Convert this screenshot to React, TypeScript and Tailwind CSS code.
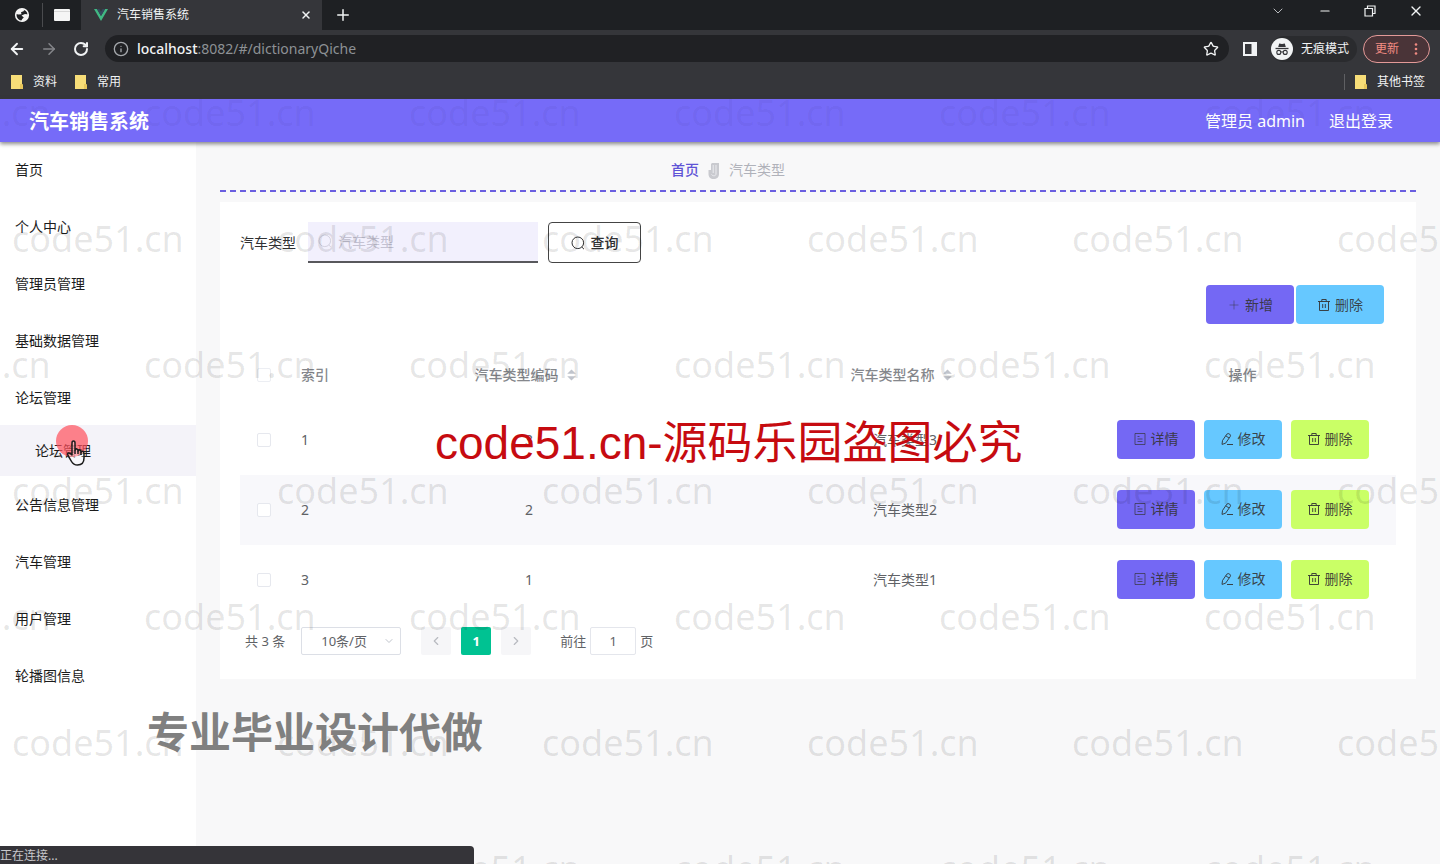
import React from 'react';
import { ArrowLeft, ArrowRight, ChevronDown, ChevronLeft, ChevronRight, Info, Minus, Plus, RotateCw, Star, X } from 'lucide-react';

type IconProps = { className?: string };

const GlobeIcon: React.FC<IconProps> = ({ className }) => (
  <svg className={className} viewBox="0 0 16 16" fill="none">
    <circle cx="8" cy="8" r="6.3" stroke="#f4f4f4" strokeWidth="1.6" />
    <path d="M1.6 7C2.4 3.5 5.6 1.2 9.6 1.8L10 4L7 5.2L7.5 7.2L4.6 7.6Z" fill="#f4f4f4" />
    <path d="M14.4 7.5L11 7L7.5 8.6L9.8 10.6L8.2 12L7 14.4C11 15 14.4 11.8 14.4 7.5Z" fill="#f4f4f4" />
  </svg>
);

const WindowIcon: React.FC<IconProps> = ({ className }) => (
  <svg className={className} viewBox="0 0 16 12">
    <rect width="16" height="12" rx="1" fill="#f5f5f5" />
    <path d="M0 2.5H16" stroke="#c4c4c4" strokeWidth="0.6" />
  </svg>
);

const VueIcon: React.FC<IconProps> = ({ className }) => (
  <svg className={className} viewBox="0 0 14 12">
    <path d="M0 0H2.9L7 7.1L11.1 0H14L7 12Z" fill="#41b883" />
    <path d="M2.9 0H5.4L7 2.8L8.6 0H11.1L7 7.1Z" fill="#35495e" />
  </svg>
);

const RestoreIcon: React.FC<IconProps> = ({ className }) => (
  <svg className={className} viewBox="0 0 12 12" fill="none" stroke="currentColor" strokeWidth="1.2">
    <path d="M1 3.5H8.5V11H1ZM3.5 3.5V1H11V8.5H8.5" />
  </svg>
);

const FolderIcon: React.FC<IconProps> = ({ className }) => (
  <svg className={className} viewBox="0 0 12 14">
    <path d="M0 0H11V9L12 10V14H0Z" fill="#f7dd78" />
    <path d="M9 9L11 9L12 10V14H9Z" fill="#e8c65a" />
  </svg>
);

const SidePanelIcon: React.FC<IconProps> = ({ className }) => (
  <svg className={className} viewBox="0 0 14 14">
    <path fillRule="evenodd" d="M0 0H14V14H0ZM2 2V12H8.5V2Z" fill="#f1f3f4" />
  </svg>
);

const IncognitoIcon: React.FC<IconProps> = ({ className }) => (
  <svg className={className} viewBox="0 0 22 22" fill="none">
    <circle cx="11" cy="11" r="11" fill="#f1f3f4" />
    <path d="M7.2 9L8.2 5.4L11 6L13.8 5.4L14.8 9Z" fill="#35363a" />
    <path d="M4.5 10.5H17.5" stroke="#35363a" strokeWidth="1.3" />
    <circle cx="7.8" cy="14.4" r="2" stroke="#35363a" strokeWidth="1.1" />
    <circle cx="14.2" cy="14.4" r="2" stroke="#35363a" strokeWidth="1.1" />
    <path d="M9.8 14.2Q11 13.4 12.2 14.2" stroke="#35363a" />
  </svg>
);

const ClipIcon: React.FC<IconProps> = ({ className }) => (
  <svg className={className} viewBox="0 0 12 16">
    <path d="M4 0H11V11C11 14 9 16 5.5 16C2.5 16 0.5 14 0.5 11V7H3V1Z" fill="#c9cacf" />
    <path d="M5.2 2V10M8 2V11C8 13 5 13.5 3.5 11.5" stroke="#ececf0" fill="none" />
  </svg>
);

const SearchIcon: React.FC<IconProps> = ({ className }) => (
  <svg className={className} viewBox="0 0 14 14" fill="none" stroke="currentColor">
    <circle cx="6.8" cy="6.8" r="5.8" />
    <path d="M10.8 11L13 13.2" />
  </svg>
);

const TrashIcon: React.FC<IconProps> = ({ className }) => (
  <svg className={className} viewBox="0 0 14 14" fill="none" stroke="currentColor">
    <path d="M1 3.5H13M2.5 3.5V12.5H11.5V3.5M4.8 3.5V1.5H9.2V3.5M5.7 6V10M8.3 6V10" />
  </svg>
);

const DetailIcon: React.FC<IconProps> = ({ className }) => (
  <svg className={className} viewBox="0 0 14 14" fill="none" stroke="currentColor" strokeOpacity="0.75">
    <path d="M2 1.5H12V12.5H2ZM4.5 4.5H6.5M4.5 7H9.5M4.5 9.5H9.5" />
  </svg>
);

const EditIcon: React.FC<IconProps> = ({ className }) => (
  <svg className={className} viewBox="0 0 14 14" fill="none" stroke="currentColor">
    <path d="M2.5 8.5L6.8 2.2Q8.2 1 9.6 2Q11 3.2 10.2 4.6L5.6 11.2L2 12.4ZM5.8 3.8L9 6M7 12.5H13" />
  </svg>
);

const SortIcon: React.FC<IconProps> = ({ className }) => (
  <svg className={className} viewBox="0 0 10 14" fill="#c0c4cc">
    <path d="M0 5.5L5 0.5L10 5.5ZM0 8.5H10L5 13.5Z" />
  </svg>
);

const HandIcon: React.FC<IconProps> = ({ className }) => (
  <svg className={className} viewBox="0 0 20 26" fill="none" stroke="#1c1c1c" strokeWidth="1.5" strokeLinejoin="round">
    <path
      d="M6 15V3Q6 1 7.5 1Q9 1 9 3V10Q9.5 8.5 11 9Q12 9.3 12 11Q12.5 9.5 14 10Q15 10.4 15 12Q15.6 11 17 11.5Q18 12 18 13.5V18Q18 25 11.5 25Q7.5 25 5.5 21.5L2 15.5Q1 13.5 2.5 13Q4 12.6 6 15Z"
      fill="#ffffff"
      fillOpacity="0.35"
    />
    <path d="M9 10V14M12 11V14M15 12V15" />
  </svg>
);

const menu = [
  { label: '首页' },
  { label: '个人中心' },
  { label: '管理员管理' },
  { label: '基础数据管理' },
  { label: '论坛管理', child: '论坛管理' },
  { label: '公告信息管理' },
  { label: '汽车管理' },
  { label: '用户管理' },
  { label: '轮播图信息' },
];

const rows = [
  { index: 1, code: '3', name: '汽车类型3' },
  { index: 2, code: '2', name: '汽车类型2' },
  { index: 3, code: '1', name: '汽车类型1' },
];

const actionClass = 'flex h-[39px] w-[78px] items-center justify-center gap-1 rounded text-sm text-[#333]/90';

const BrowserChrome: React.FC = () => (
  <div className="bg-[#35363a] text-[#f1f3f4]">
    <div className="flex h-[30px] items-center bg-[#1e2023]">
      <button className="ml-[14px]" aria-label="标签页 1">
        <GlobeIcon className="h-4 w-4" />
      </button>
      <span className="ml-3 h-6 w-px bg-[#4a4b4e]" />
      <button className="mx-[11px]" aria-label="标签页 2">
        <WindowIcon className="h-3 w-4" />
      </button>
      <div className="flex h-full w-[241px] items-center bg-[#35363a] pr-[10px] pl-3">
        <VueIcon className="h-3 w-4" />
        <span className="ml-2 flex-1 text-xs">汽车销售系统</span>
        <button aria-label="关闭标签页">
          <X className="h-3 w-3" strokeWidth={3} />
        </button>
      </div>
      <button className="ml-3" aria-label="新标签页">
        <Plus className="h-[18px] w-[18px]" />
      </button>
      <div className="mr-4 ml-auto flex items-center gap-8 pb-2">
        <button aria-label="搜索标签页">
          <ChevronDown className="h-4 w-4 text-[#b8babd]" strokeWidth={1.5} />
        </button>
        <button aria-label="最小化">
          <Minus className="h-[14px] w-[14px]" />
        </button>
        <button aria-label="还原">
          <RestoreIcon className="h-3 w-3" />
        </button>
        <button aria-label="关闭">
          <X className="h-4 w-4" />
        </button>
      </div>
    </div>

    <div className="flex h-[37px] items-center pr-[10px] pl-2">
      <button aria-label="后退">
        <ArrowLeft className="h-[18px] w-[18px]" strokeWidth={2.5} />
      </button>
      <button className="ml-[14px] text-[#85868a]" aria-label="前进">
        <ArrowRight className="h-[18px] w-[18px]" />
      </button>
      <button className="ml-[15px]" aria-label="刷新">
        <RotateCw className="h-4 w-4" strokeWidth={3} />
      </button>
      <div className="ml-4 flex h-[27px] flex-1 items-center rounded-full bg-[#202124] pr-[10px] pl-2 text-sm">
        <Info className="mr-2 h-4 w-4 text-[#a5a8ac]" />
        <label htmlFor="address" className="font-medium">localhost</label>
        <input id="address" className="min-w-0 flex-1 bg-transparent text-[#8d9195] outline-none" defaultValue=":8082/#/dictionaryQiche" />
        <button aria-label="收藏">
          <Star className="h-4 w-4" />
        </button>
      </div>
      <button className="ml-[14px]" aria-label="侧边栏">
        <SidePanelIcon className="h-[14px] w-[14px]" />
      </button>
      <div className="ml-[14px] flex h-[26px] items-center gap-2 rounded-full bg-[#2a2b2e] pr-2 text-xs">
        <IncognitoIcon className="h-[22px] w-[22px]" />
        无痕模式
      </div>
      <button className="ml-[6px] flex h-7 w-[67px] items-center justify-between rounded-full border border-[#e39a98] bg-[#4a3438] px-[11px] text-xs text-[#f28b82]">
        更新
        <svg className="h-3 w-1" viewBox="0 0 4 12" fill="currentColor">
          <circle cx="2" cy="1.5" r="1.3" />
          <circle cx="2" cy="6" r="1.3" />
          <circle cx="2" cy="10.5" r="1.3" />
        </svg>
      </button>
    </div>

    <div className="flex h-8 items-center pr-[15px] pb-[2px] pl-[11px] text-xs">
      <a href="#ziliao" className="flex items-center gap-[10px]">
        <FolderIcon className="h-[14px] w-3" />
        资料
      </a>
      <a href="#changyong" className="ml-[18px] flex items-center gap-[10px]">
        <FolderIcon className="h-[14px] w-3" />
        常用
      </a>
      <a href="#other" className="ml-auto flex items-center gap-[10px]">
        <span className="h-4 w-px bg-[#5f6063]" />
        <FolderIcon className="h-[14px] w-3" />
        其他书签
      </a>
    </div>
  </div>
);

const Sidebar: React.FC = () => (
  <nav className="w-[196px] shrink-0 bg-white text-sm text-[#1c1c1c]">
    {menu.map((item) => (
      <div key={item.label}>
        <a href="#menu" className="flex h-[57px] items-center pb-[2px] pl-[15px]">
          {item.label}
        </a>
        {item.child && (
          <a href="#forum" className="relative -mt-[2px] mb-px flex h-[51px] items-center bg-[#f4f3f9] pl-[35px]">
            {item.child}
            <span className="absolute top-0 left-14 h-8 w-8 rounded-full bg-[#ff4f5b]/70" />
            <HandIcon className="absolute top-[15px] left-[66px] h-[26px] w-5" />
          </a>
        )}
      </div>
    ))}
  </nav>
);

const DataTable: React.FC = () => (
  <table className="mt-5 w-full table-fixed text-sm text-[#606266]">
    <colgroup>
      <col className="w-12" />
      <col className="w-[53px]" />
      <col />
      <col />
      <col className="w-[303px]" />
    </colgroup>
    <thead>
      <tr className="h-[61px] text-[#85878c]">
        <th>
          <input type="checkbox" aria-label="全选" className="mx-auto block h-[14px] w-[14px] appearance-none rounded-xs border border-[#eceef3] bg-white" />
        </th>
        <th className="pl-[13px] text-left font-medium">索引</th>
        <th className="pr-2 font-medium">
          <span className="flex items-center justify-center gap-2">
            汽车类型编码
            <SortIcon className="h-3 w-[9px]" />
          </span>
        </th>
        <th className="pr-2 font-medium">
          <span className="flex items-center justify-center gap-2">
            汽车类型名称
            <SortIcon className="h-3 w-[9px]" />
          </span>
        </th>
        <th className="pr-1 font-medium">操作</th>
      </tr>
    </thead>
    <tbody>
      {rows.map((row) => (
        <tr key={row.index} className="h-[70px] even:bg-[#f8f8fb]">
          <td>
            <input type="checkbox" aria-label={row.name} className="mx-auto block h-[14px] w-[14px] appearance-none rounded-xs border border-[#e6e8ee] bg-white" />
          </td>
          <td className="pl-[13px]">{row.index}</td>
          <td className="text-center">{row.code}</td>
          <td className="text-center">{row.name}</td>
          <td className="pr-1 pb-[2px]">
            <div className="flex justify-center gap-[9px]">
              <button className={`${actionClass} bg-[#7468f4]`}>
                <DetailIcon className="h-[14px] w-[14px]" />
                详情
              </button>
              <button className={`${actionClass} bg-[#66c8ff]`}>
                <EditIcon className="h-[14px] w-[14px]" />
                修改
              </button>
              <button className={`${actionClass} bg-[#caff66]`}>
                <TrashIcon className="h-[14px] w-[14px]" />
                删除
              </button>
            </div>
          </td>
        </tr>
      ))}
    </tbody>
  </table>
);

const Pagination: React.FC = () => (
  <div className="mt-3 flex h-7 items-center pl-[5px] text-sm text-[#606266]">
    <span className="text-[13px]">共 3 条</span>
    <div className="relative ml-4">
      <select aria-label="每页条数" className="h-7 w-[100px] appearance-none rounded-xs border border-[#dcdfe6] bg-white pl-[19px] text-[13px]">
        <option>10条/页</option>
      </select>
      <ChevronDown className="pointer-events-none absolute top-2 right-[6px] h-3 w-3 text-[#c0c4cc]" />
    </div>
    <button className="ml-5 flex h-7 w-[30px] items-center justify-center rounded-xs bg-[#f6f6f8] text-[#b8bac0]" aria-label="上一页">
      <ChevronLeft className="h-[14px] w-[14px]" />
    </button>
    <button className="ml-[10px] h-7 w-[30px] rounded-xs bg-[#00c292] text-[13px] font-bold text-white">1</button>
    <button className="ml-[10px] flex h-7 w-[30px] items-center justify-center rounded-xs bg-[#f6f6f8] text-[#b8bac0]" aria-label="下一页">
      <ChevronRight className="h-[14px] w-[14px]" />
    </button>
    <label htmlFor="goto" className="ml-[29px] text-[13px]">前往</label>
    <input id="goto" defaultValue="1" className="mx-1 h-7 w-[46px] rounded-xs border border-[#e4e6ec] bg-white text-center text-[13px]" />
    <span className="text-[13px]">页</span>
  </div>
);

const Watermarks: React.FC = () => (
  <div className="pointer-events-none absolute inset-0 z-20 overflow-hidden pt-[50px]">
    {[0, 1, 2, 3, 4, 5, 6].map((line) => (
      <div
        key={line}
        className={`flex h-[126px] items-center ${line % 2 === 0 ? '-ml-[121px]' : 'ml-3'} ${line === 0 ? 'text-black/5' : 'text-black/10'}`}
      >
        {[0, 1, 2, 3, 4, 5].map((n) => (
          <span key={n} className="w-[265px] shrink-0 text-4xl">
            code51.cn
          </span>
        ))}
      </div>
    ))}
    <p className="absolute top-[411px] left-[435px] font-['Liberation_Sans','Noto_Sans_CJK_SC',sans-serif] text-[45px] leading-[64px] whitespace-nowrap text-[#c60b10]">
      <span className="text-[46px]">code51.cn-</span>源码乐园盗图必究
    </p>
    <p className="absolute top-[700px] left-[147px] text-[42px] leading-[64px] font-bold whitespace-nowrap text-[#808080] [text-shadow:0_0_2px_#fff]">
      专业毕业设计代做
    </p>
  </div>
);

const App: React.FC = () => {
  return (
    <div className="relative flex min-h-screen flex-col bg-[#f8f8f9] font-['Noto_Sans','Noto_Sans_CJK_SC',sans-serif]">
      <BrowserChrome />

      <header className="relative z-10 flex h-[43px] items-center bg-[#766bf8] pr-[47px] pl-[29px] text-white shadow-[0_2px_4px_rgba(60,60,60,0.6)]">
        <h1 className="pt-[2px] text-xl font-bold">汽车销售系统</h1>
        <span className="ml-auto">管理员 admin</span>
        <a href="#logout" className="ml-6">退出登录</a>
      </header>

      <div className="flex flex-1">
        <Sidebar />
        <main className="min-w-0 flex-1 px-6 pt-[18px]">
          <div className="flex h-8 items-start justify-center border-b-2 border-dashed border-[#6a5fe0] pr-[180px] text-sm">
            <a href="#home" className="font-medium text-[#5f54d6]">首页</a>
            <ClipIcon className="mx-[9px] mt-[3px] h-4 w-3" />
            <span className="text-[#b0b2ba]">汽车类型</span>
          </div>

          <section className="mt-[10px] bg-white px-5 pt-5 pb-6">
            <form className="flex items-center text-sm text-[#303133]" onSubmit={(e) => e.preventDefault()}>
              <label htmlFor="keyword">汽车类型</label>
              <div className="relative ml-3">
                <SearchIcon className="absolute top-3 left-[10px] h-[14px] w-[14px] text-[#d3d1df]" />
                <input
                  id="keyword"
                  placeholder="汽车类型"
                  className="h-[41px] w-[230px] border-b-2 border-[#58585c] bg-[#f2f0fd] pl-[30px] text-sm placeholder:text-[#c4c2d2]"
                />
              </div>
              <button className="ml-[10px] flex h-[41px] w-[93px] items-center justify-center gap-[6px] rounded border border-[#444] font-medium">
                <SearchIcon className="h-[14px] w-[14px]" />
                查询
              </button>
            </form>

            <div className="mt-[22px] flex justify-end gap-[2px] pr-3 text-sm text-[#333]/90">
              <button className="flex h-[39px] w-[88px] items-center justify-center gap-1 rounded bg-[#7468f4]">
                <Plus className="h-[14px] w-[14px] text-[#333]/50" strokeWidth={1.5} />
                新增
              </button>
              <button className="flex h-[39px] w-[88px] items-center justify-center gap-1 rounded bg-[#66c8ff]">
                <TrashIcon className="h-[14px] w-[14px]" />
                删除
              </button>
            </div>

            <DataTable />
            <Pagination />
          </section>
        </main>
      </div>

      <Watermarks />

      <div className="absolute bottom-0 left-0 z-30 h-[18px] w-[474px] rounded-tr bg-[#353439] text-xs leading-5 text-[#c8c8cc]">正在连接...</div>
    </div>
  );
};

export default App;
